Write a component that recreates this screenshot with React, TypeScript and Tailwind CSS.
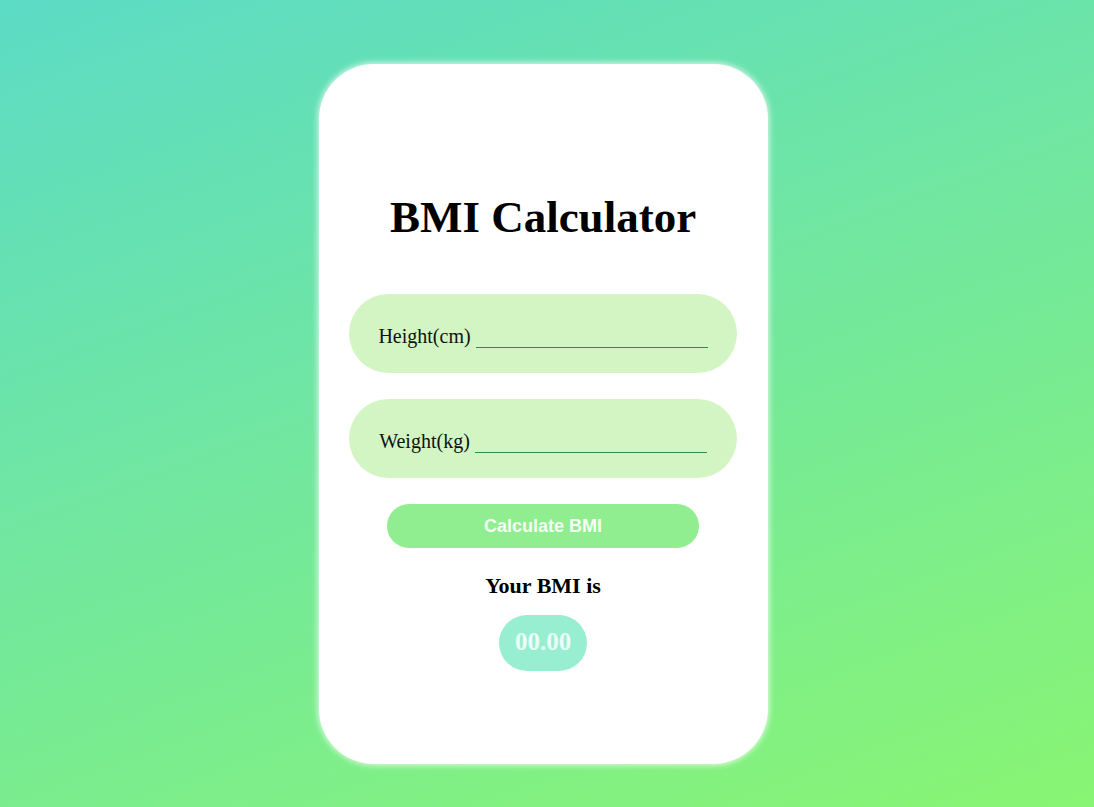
import React, { ReactElement, useState } from "react";

const serif = "font-['Liberation_Serif','Times_New_Roman',serif]";

function Field(p: {
  label: string;
  value: string;
  onChange: (v: string) => void;
}): ReactElement {
  return (
    <div className="flex h-[79px] w-[388px] items-center justify-center gap-[5px] rounded-[40px] bg-[#d3f5c3] pt-[4px]">
      <label className={`${serif} text-[20px] leading-none text-[#111]`}>
        {p.label}
      </label>
      <input
        type="text"
        value={p.value}
        onChange={(e) => p.onChange(e.target.value)}
        className={`${serif} h-[24px] w-[232px] border-b border-[#2e8b57] bg-transparent text-[18px] outline-none`}
      />
    </div>
  );
}

export default function App(): ReactElement {
  const [height, setHeight] = useState<string>("");
  const [weight, setWeight] = useState<string>("");
  const [bmi, setBmi] = useState<string>("00.00");

  const calculate = () => {
    const h: number = parseFloat(height) / 100;
    const w: number = parseFloat(weight);
    if (!h || !w) return;
    setBmi((w / (h * h)).toFixed(2));
  };

  return (
    <div className="flex min-h-screen justify-center bg-[linear-gradient(160deg,#5cdbc5,#89f573)] pr-[8px] pt-[64px]">
      <div className="flex h-[700px] w-[449px] flex-col items-center rounded-[55px] border-[5px] border-white/60 bg-white pt-[126px] shadow-[0_0_6px_1px_rgba(255,255,255,0.8)]">
        <h1 className={`${serif} text-[45px] font-bold leading-none text-black`}>
          BMI Calculator
        </h1>
        <div className="mt-[54px] flex flex-col items-center gap-[26px]">
          <Field label="Height(cm)" value={height} onChange={setHeight} />
          <Field label="Weight(kg)" value={weight} onChange={setWeight} />
          <button
            onClick={calculate}
            className="h-[44px] w-[312px] rounded-full bg-[#90ee90] font-['Liberation_Sans',Arial,sans-serif] text-[18px] font-bold text-[#f5fff5]"
          >
            Calculate BMI
          </button>
        </div>
        <h3
          className={`${serif} mt-[27px] text-[22px] font-bold leading-none text-black`}
        >
          Your BMI is
        </h3>
        <div
          className={`${serif} mt-[18px] flex h-[56px] items-center rounded-full bg-[#98eed0] px-[16px] pb-[4px] text-[25px] font-bold leading-none text-[#eafff6]`}
        >
          {bmi}
        </div>
      </div>
    </div>
  );
}
